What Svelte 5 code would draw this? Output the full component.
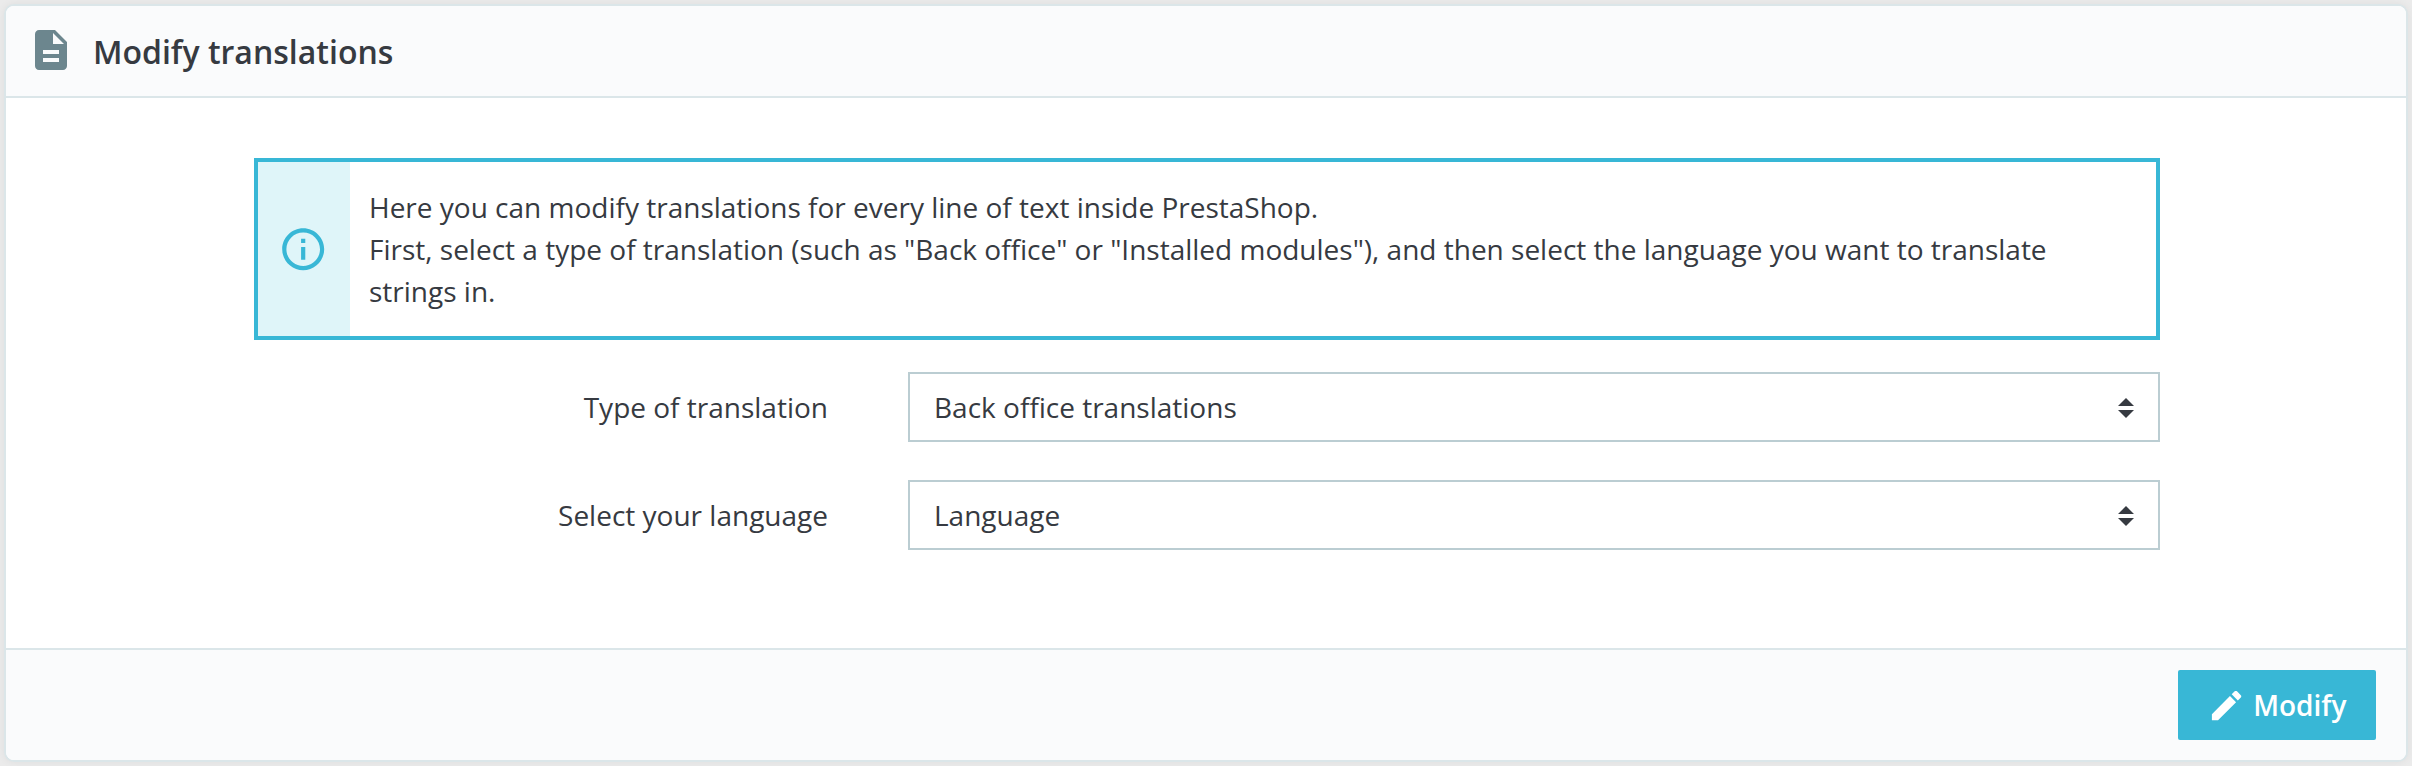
<script>
  const lines = [
    'Here you can modify translations for every line of text inside PrestaShop.',
    'First, select a type of translation (such as "Back office" or "Installed modules"), and then select the language you want to translate strings in.'
  ];
  const fields = [
    { label: 'Type of translation', value: 'Back office translations' },
    { label: 'Select your language', value: 'Language' }
  ];
</script>

<main class="page">
  <section class="card">
    <header class="card-header">
      <svg class="doc" viewBox="0 0 24 24" aria-hidden="true">
        <path d="M14 2H6c-1.1 0-1.99.9-1.99 2L4 20c0 1.1.89 2 1.99 2H18c1.1 0 2-.9 2-2V8l-6-6zm2 16H8v-2h8v2zm0-4H8v-2h8v2zm-3-5V3.500L18.500 9H13z" />
      </svg>
      <h3>Modify translations</h3>
    </header>

    <div class="card-body">
      <div class="alert">
        <div class="alert-icon">
          <svg viewBox="0 0 24 24" aria-hidden="true">
            <path d="M11 17h2v-6h-2v6zm1-15C6.480 2 2 6.480 2 12s4.480 10 10 10 10-4.480 10-10S17.520 2 12 2zm0 18c-4.410 0-8-3.590-8-8s3.590-8 8-8 8 3.590 8 8-3.590 8-8 8zM11 9h2V7h-2v2z" />
          </svg>
        </div>
        <div class="alert-text">
          {#each lines as line}
            <p>{line}</p>
          {/each}
        </div>
      </div>

      {#each fields as field}
        <div class="row">
          <span class="label">{field.label}</span>
          <button class="select" type="button">
            <span>{field.value}</span>
            <svg viewBox="0 0 16 20" aria-hidden="true">
              <path d="M8 0l8 8H0zM0 12h16l-8 8z" />
            </svg>
          </button>
        </div>
      {/each}
    </div>

    <footer class="card-footer">
      <button class="primary" type="button">
        <svg viewBox="0 0 24 24" aria-hidden="true">
          <path d="M3 17.250V21h3.750L17.810 9.940l-3.750-3.750L3 17.250zM20.710 7.040c.39-.39.39-1.020 0-1.410l-2.340-2.340c-.39-.39-1.020-.39-1.410 0l-1.830 1.830 3.750 3.750 1.830-1.830z" />
        </svg>
        <span>Modify</span>
      </button>
    </footer>
  </section>
</main>

<style>
  :global(body) {
    background: #ebebeb;
  }
  .page {
    box-sizing: border-box;
    height: 766px;
    padding: 4px;
    overflow: hidden;
    font-family: 'Open Sans', sans-serif;
    font-size: 28px;
    line-height: 42px;
    color: #363a41;
  }
  .card {
    box-sizing: border-box;
    height: 758px;
    display: flex;
    flex-direction: column;
    border: 2px solid #dbe6e9;
    border-radius: 10px;
    background: #fff;
    box-shadow: 0 0 8px 0 rgba(0, 0, 0, 0.06);
    overflow: hidden;
  }
  .card-header {
    box-sizing: border-box;
    height: 92px;
    display: flex;
    align-items: center;
    padding: 0 20px 0 20.500px;
    border-bottom: 2px solid #dbe6e9;
    background: #fafbfc;
  }
  .doc {
    width: 48px;
    height: 48px;
    margin-top: -2px;
    fill: #6c868e;
  }
  h3 {
    margin: 0 0 0 18.500px;
    padding-top: 2px;
    font-size: 32px;
    font-weight: 600;
  }
  .card-body {
    flex: 1;
    padding: 60px 246px 0 248px;
  }
  .alert {
    display: flex;
    border: 4px solid #38b7d6;
    margin-bottom: 32px;
  }
  .alert-icon {
    width: 92px;
    flex: none;
    display: flex;
    align-items: center;
    justify-content: center;
    background: #dff5f9;
  }
  .alert-icon svg {
    width: 50.400px;
    height: 50.400px;
    fill: #38b7d6;
    margin-right: 2px;
  }
  .alert-text {
    flex: 1;
    padding: 24px 60px 24px 19px;
  }
  p {
    margin: 0;
  }
  .row {
    display: grid;
    grid-template-columns: 574px 1252px;
    column-gap: 80px;
    align-items: center;
    margin-bottom: 38px;
  }
  .label {
    text-align: right;
  }
  button {
    font: inherit;
    color: inherit;
  }
  .select {
    box-sizing: border-box;
    height: 70px;
    display: flex;
    align-items: center;
    justify-content: space-between;
    padding: 0 24px;
    border: 2px solid #bbcdd2;
    background: #fff;
  }
  .select svg {
    width: 16px;
    height: 20px;
    margin-top: 2px;
    fill: #363a41;
  }
  .card-footer {
    box-sizing: border-box;
    height: 112px;
    display: flex;
    align-items: center;
    justify-content: flex-end;
    padding: 0 30px;
    border-top: 2px solid #dbe6e9;
    background: #fafbfc;
  }
  .primary {
    box-sizing: border-box;
    width: 198px;
    height: 70px;
    display: flex;
    align-items: center;
    padding: 0 0 0 29px;
    border: 0;
    border-radius: 2px;
    background: #38b7d6;
    color: #fff;
    font-weight: 600;
  }
  .primary svg {
    width: 39.200px;
    height: 39.200px;
    margin: 2px 7px 0 0;
    fill: #fff;
  }
</style>
